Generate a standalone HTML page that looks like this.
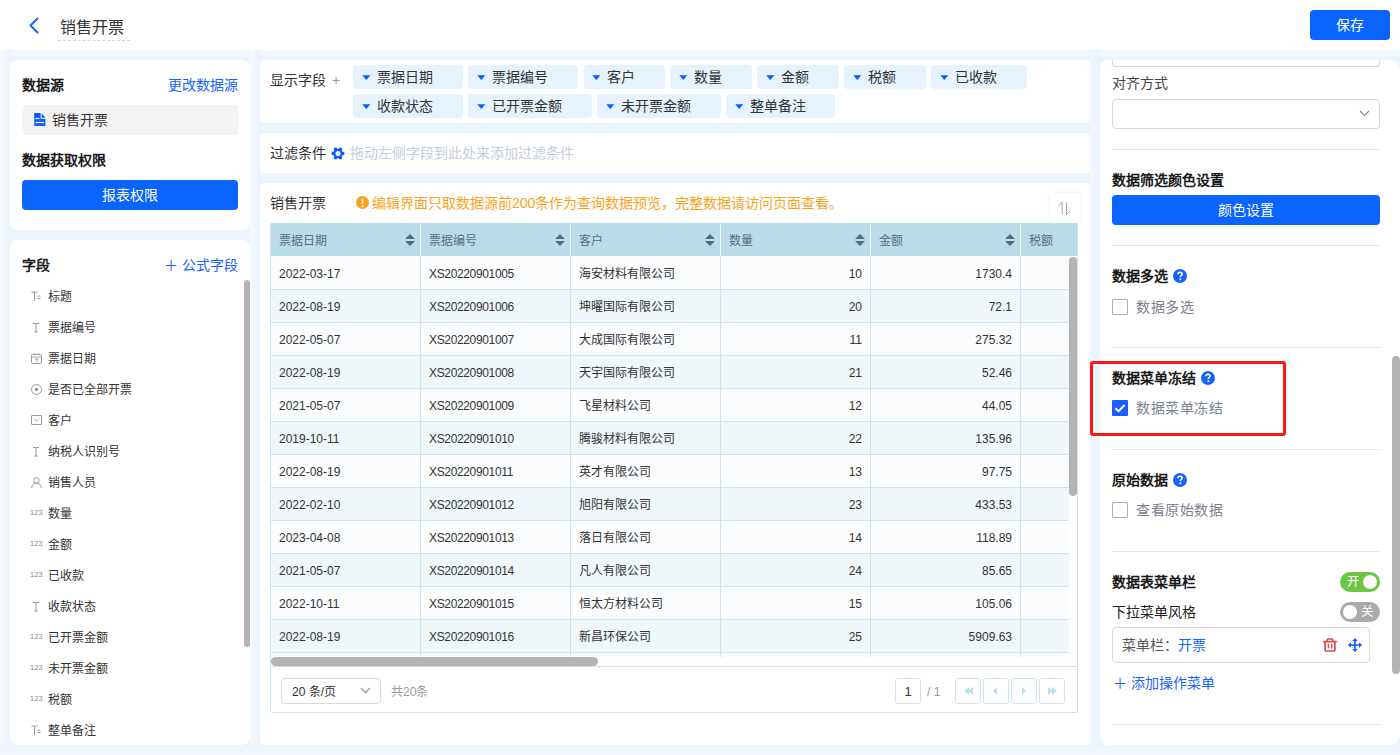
<!DOCTYPE html>
<html lang="zh-CN">
<head>
<meta charset="utf-8">
<style>
*{box-sizing:border-box;margin:0;padding:0}
html,body{width:1400px;height:755px;overflow:hidden}
body{position:relative;background:#ECF4FD;font-family:"Liberation Sans",sans-serif;font-size:14px;color:#333}
.abs{position:absolute}
.panel{position:absolute;background:#fff}
.t{position:absolute;white-space:nowrap;line-height:16px}
.b{font-weight:bold;color:#1a1a1a}
.blue{color:#1763FF}
.btn{position:absolute;background:#0A64FF;color:#fff;border-radius:4px;text-align:center}
</style>
</head>
<body>
<!-- header -->
<div class="panel" style="left:0;top:0;width:1400px;height:50px"></div>
<svg class="abs" style="left:28px;top:17px" width="12" height="17" viewBox="0 0 12 17"><path d="M9.5 1.5 L2.5 8.5 L9.5 15.5" fill="none" stroke="#1763FF" stroke-width="2" stroke-linecap="round" stroke-linejoin="round"/></svg>
<div class="t" style="left:60px;top:19px;font-size:16px;line-height:18px;color:#333">销售开票</div>
<div class="abs" style="left:58px;top:40px;width:72px;border-top:1px dashed #D6D6D6"></div>
<div class="btn" style="left:1310px;top:10px;width:80px;height:30px;line-height:30px;font-size:14px">保存</div>

<div class="abs" style="left:0;top:50px;width:1400px;height:10px;background:linear-gradient(180deg,#F4F9FE,#E8F2FD)"></div>
<div class="abs" style="left:0;top:50px;width:10px;height:705px;background:linear-gradient(90deg,#F6FAFF,#EBF3FD)"></div>
<div class="abs" style="left:250px;top:50px;width:10px;height:705px;background:linear-gradient(90deg,#F8FBFF,#E9F2FD)"></div>
<div class="abs" style="left:1090px;top:50px;width:10px;height:705px;background:linear-gradient(90deg,#F2F8FF,#E9F2FD)"></div>
<div class="abs" style="left:0;top:745px;width:1400px;height:10px;background:linear-gradient(180deg,#EDF5FE,#F3F8FE)"></div>

<!-- left panel 1 -->
<div class="panel" style="left:10px;top:60px;width:240px;height:170px;border-radius:8px"></div>
<div class="t b" style="left:22px;top:77px">数据源</div>
<div class="t blue" style="left:168px;top:77px">更改数据源</div>
<div class="abs" style="left:22px;top:105px;width:216px;height:30px;background:#F4F4F4;border-radius:2px"></div>
<svg class="abs" style="left:33.5px;top:113px" width="12" height="13" viewBox="0 0 12 13"><path d="M0.2 0 H6.6 V5.8 H11.4 V13 H0.2 Z" fill="#0A5CFF"/><path d="M7.6 0.5 L11.4 4.8 H7.6 Z" fill="#0A5CFF"/><rect x="1.5" y="4.9" width="3.9" height="1.2" fill="#fff"/><rect x="1.5" y="8.9" width="8.6" height="1.2" fill="#fff"/></svg>
<div class="t" style="left:52px;top:112px">销售开票</div>
<div class="t b" style="left:22px;top:152px">数据获取权限</div>
<div class="btn" style="left:22px;top:180px;width:216px;height:30px;line-height:30px">报表权限</div>

<!-- left panel 2 -->
<div class="panel" style="left:10px;top:240px;width:240px;height:505px;border-radius:8px"></div>
<div class="t b" style="left:22px;top:257px">字段</div>
<div class="t blue" style="left:164px;top:257px">＋ 公式字段</div>
<div class="abs" style="left:244px;top:280px;width:6px;height:367px;background:#B3B3B3;border-radius:3px"></div>
<svg class="abs" style="left:31px;top:290.5px" width="12" height="12" viewBox="0 0 12 12"><path d="M0.5 1 H6.5 M3.5 1 V10" stroke="#999" stroke-width="1" fill="none"/><path d="M6.5 5 H9.5 M6.5 7.5 H9.5" stroke="#999" stroke-width="1" fill="none"/></svg>
<div class="t" style="left:48px;top:288.5px;font-size:12px">标题</div>
<svg class="abs" style="left:31px;top:321.5px" width="12" height="12" viewBox="0 0 12 12"><path d="M2 1.5 H8 M5 1.5 V10 M3.3 10 H6.7" stroke="#999" stroke-width="1" fill="none"/></svg>
<div class="t" style="left:48px;top:319.5px;font-size:12px">票据编号</div>
<svg class="abs" style="left:31px;top:352.5px" width="12" height="12" viewBox="0 0 12 12"><rect x="0.5" y="1.5" width="10" height="9" rx="1" stroke="#999" stroke-width="1" fill="none"/><path d="M0.5 4 H10.5 M3 0 V2 M8 0 V2 M4 6 H7 L5 9" stroke="#999" stroke-width="0.9" fill="none"/></svg>
<div class="t" style="left:48px;top:350.5px;font-size:12px">票据日期</div>
<svg class="abs" style="left:31px;top:383.5px" width="12" height="12" viewBox="0 0 12 12"><circle cx="5.5" cy="5.5" r="5" stroke="#999" stroke-width="1" fill="none"/><circle cx="5.5" cy="5.5" r="1.4" fill="#777"/></svg>
<div class="t" style="left:48px;top:381.5px;font-size:12px">是否已全部开票</div>
<svg class="abs" style="left:31px;top:414.5px" width="12" height="12" viewBox="0 0 12 12"><rect x="0.5" y="0.5" width="10" height="9" rx="0.5" stroke="#999" stroke-width="1" fill="none"/><path d="M3.3 4 L5.5 6 L7.7 4" stroke="#999" stroke-width="0.9" fill="none"/></svg>
<div class="t" style="left:48px;top:412.5px;font-size:12px">客户</div>
<svg class="abs" style="left:31px;top:445.5px" width="12" height="12" viewBox="0 0 12 12"><path d="M2 1.5 H8 M5 1.5 V10 M3.3 10 H6.7" stroke="#999" stroke-width="1" fill="none"/></svg>
<div class="t" style="left:48px;top:443.5px;font-size:12px">纳税人识别号</div>
<svg class="abs" style="left:31px;top:476.5px" width="12" height="12" viewBox="0 0 12 12"><circle cx="5.5" cy="3.3" r="2.8" stroke="#999" stroke-width="1" fill="none"/><path d="M0.6 11 C1 7.5 3 6.3 5.5 6.3 C8 6.3 10 7.5 10.4 11" stroke="#999" stroke-width="1" fill="none"/></svg>
<div class="t" style="left:48px;top:474.5px;font-size:12px">销售人员</div>
<div class="t" style="left:30px;top:508.5px;font-size:7.4px;line-height:8px;color:#8a8a8a;letter-spacing:0.2px">123</div>
<div class="t" style="left:48px;top:505.5px;font-size:12px">数量</div>
<div class="t" style="left:30px;top:539.5px;font-size:7.4px;line-height:8px;color:#8a8a8a;letter-spacing:0.2px">123</div>
<div class="t" style="left:48px;top:536.5px;font-size:12px">金额</div>
<div class="t" style="left:30px;top:570.5px;font-size:7.4px;line-height:8px;color:#8a8a8a;letter-spacing:0.2px">123</div>
<div class="t" style="left:48px;top:567.5px;font-size:12px">已收款</div>
<svg class="abs" style="left:31px;top:600.5px" width="12" height="12" viewBox="0 0 12 12"><path d="M2 1.5 H8 M5 1.5 V10 M3.3 10 H6.7" stroke="#999" stroke-width="1" fill="none"/></svg>
<div class="t" style="left:48px;top:598.5px;font-size:12px">收款状态</div>
<div class="t" style="left:30px;top:632.5px;font-size:7.4px;line-height:8px;color:#8a8a8a;letter-spacing:0.2px">123</div>
<div class="t" style="left:48px;top:629.5px;font-size:12px">已开票金额</div>
<div class="t" style="left:30px;top:663.5px;font-size:7.4px;line-height:8px;color:#8a8a8a;letter-spacing:0.2px">123</div>
<div class="t" style="left:48px;top:660.5px;font-size:12px">未开票金额</div>
<div class="t" style="left:30px;top:694.5px;font-size:7.4px;line-height:8px;color:#8a8a8a;letter-spacing:0.2px">123</div>
<div class="t" style="left:48px;top:691.5px;font-size:12px">税额</div>
<svg class="abs" style="left:31px;top:724.5px" width="12" height="12" viewBox="0 0 12 12"><path d="M0.5 1 H6.5 M3.5 1 V10" stroke="#999" stroke-width="1" fill="none"/><path d="M6.5 5 H9.5 M6.5 7.5 H9.5" stroke="#999" stroke-width="1" fill="none"/></svg>
<div class="t" style="left:48px;top:722.5px;font-size:12px">整单备注</div>

<!-- middle panels -->
<div class="panel" style="left:260px;top:60px;width:830px;height:63px;border-radius:4px"></div>
<div class="t" style="left:270px;top:72px">显示字段</div>
<div class="t" style="left:332px;top:72px;color:#999">+</div>
<div class="abs" style="left:353.3px;top:65px;width:110px;height:23.5px;background:#E6F2FE;border-radius:4px"></div>
<svg class="abs" style="left:362.0px;top:74.5px" width="9" height="6" viewBox="0 0 9 6"><path d="M0.3 0.3 H8.3 L4.3 5 Z" fill="#0A5CFF"/></svg>
<div class="t" style="left:376.9px;top:68.5px">票据日期</div>
<div class="abs" style="left:468.3px;top:65px;width:110px;height:23.5px;background:#E6F2FE;border-radius:4px"></div>
<svg class="abs" style="left:477.0px;top:74.5px" width="9" height="6" viewBox="0 0 9 6"><path d="M0.3 0.3 H8.3 L4.3 5 Z" fill="#0A5CFF"/></svg>
<div class="t" style="left:491.9px;top:68.5px">票据编号</div>
<div class="abs" style="left:583.5px;top:65px;width:81.3px;height:23.5px;background:#E6F2FE;border-radius:4px"></div>
<svg class="abs" style="left:592.2px;top:74.5px" width="9" height="6" viewBox="0 0 9 6"><path d="M0.3 0.3 H8.3 L4.3 5 Z" fill="#0A5CFF"/></svg>
<div class="t" style="left:607.1px;top:68.5px">客户</div>
<div class="abs" style="left:670.3px;top:65px;width:81.4px;height:23.5px;background:#E6F2FE;border-radius:4px"></div>
<svg class="abs" style="left:679.0px;top:74.5px" width="9" height="6" viewBox="0 0 9 6"><path d="M0.3 0.3 H8.3 L4.3 5 Z" fill="#0A5CFF"/></svg>
<div class="t" style="left:693.9px;top:68.5px">数量</div>
<div class="abs" style="left:757px;top:65px;width:81.75px;height:23.5px;background:#E6F2FE;border-radius:4px"></div>
<svg class="abs" style="left:765.7px;top:74.5px" width="9" height="6" viewBox="0 0 9 6"><path d="M0.3 0.3 H8.3 L4.3 5 Z" fill="#0A5CFF"/></svg>
<div class="t" style="left:780.6px;top:68.5px">金额</div>
<div class="abs" style="left:844.25px;top:65px;width:81.5px;height:23.5px;background:#E6F2FE;border-radius:4px"></div>
<svg class="abs" style="left:853.0px;top:74.5px" width="9" height="6" viewBox="0 0 9 6"><path d="M0.3 0.3 H8.3 L4.3 5 Z" fill="#0A5CFF"/></svg>
<div class="t" style="left:867.9px;top:68.5px">税额</div>
<div class="abs" style="left:931.25px;top:65px;width:95.5px;height:23.5px;background:#E6F2FE;border-radius:4px"></div>
<svg class="abs" style="left:940.0px;top:74.5px" width="9" height="6" viewBox="0 0 9 6"><path d="M0.3 0.3 H8.3 L4.3 5 Z" fill="#0A5CFF"/></svg>
<div class="t" style="left:954.9px;top:68.5px">已收款</div>
<div class="abs" style="left:353.3px;top:94px;width:110px;height:23.5px;background:#E6F2FE;border-radius:4px"></div>
<svg class="abs" style="left:362.0px;top:103.5px" width="9" height="6" viewBox="0 0 9 6"><path d="M0.3 0.3 H8.3 L4.3 5 Z" fill="#0A5CFF"/></svg>
<div class="t" style="left:376.9px;top:97.5px">收款状态</div>
<div class="abs" style="left:468.3px;top:94px;width:123.4px;height:23.5px;background:#E6F2FE;border-radius:4px"></div>
<svg class="abs" style="left:477.0px;top:103.5px" width="9" height="6" viewBox="0 0 9 6"><path d="M0.3 0.3 H8.3 L4.3 5 Z" fill="#0A5CFF"/></svg>
<div class="t" style="left:491.9px;top:97.5px">已开票金额</div>
<div class="abs" style="left:597.2px;top:94px;width:123.4px;height:23.5px;background:#E6F2FE;border-radius:4px"></div>
<svg class="abs" style="left:605.9px;top:103.5px" width="9" height="6" viewBox="0 0 9 6"><path d="M0.3 0.3 H8.3 L4.3 5 Z" fill="#0A5CFF"/></svg>
<div class="t" style="left:620.8px;top:97.5px">未开票金额</div>
<div class="abs" style="left:726.3px;top:94px;width:109.2px;height:23.5px;background:#E6F2FE;border-radius:4px"></div>
<svg class="abs" style="left:735.0px;top:103.5px" width="9" height="6" viewBox="0 0 9 6"><path d="M0.3 0.3 H8.3 L4.3 5 Z" fill="#0A5CFF"/></svg>
<div class="t" style="left:749.9px;top:97.5px">整单备注</div>

<div class="panel" style="left:260px;top:133px;width:830px;height:40px;border-radius:4px"></div>
<div class="t" style="left:270px;top:145px">过滤条件</div>
<svg class="abs" style="left:330.5px;top:146.5px" width="14" height="13" viewBox="0 0 14 13"><g fill="#0A5CFF"><circle cx="7" cy="6.5" r="4.6"/><circle cx="11.6" cy="6.5" r="1.9"/><circle cx="2.4" cy="6.5" r="1.9"/><circle cx="9.3" cy="2.5" r="1.9"/><circle cx="4.7" cy="2.5" r="1.9"/><circle cx="9.3" cy="10.5" r="1.9"/><circle cx="4.7" cy="10.5" r="1.9"/></g><circle cx="7" cy="6.5" r="2.5" fill="#fff"/></svg>
<div class="t" style="left:350px;top:145px;color:#C5CDD9">拖动左侧字段到此处来添加过滤条件</div>

<div class="panel" style="left:260px;top:183px;width:830px;height:562px;border-radius:4px"></div>
<div class="t" style="left:270px;top:195px">销售开票</div>
<svg class="abs" style="left:356px;top:196px" width="13" height="13" viewBox="0 0 13 13"><circle cx="6.5" cy="6.5" r="6.5" fill="#FBA21C"/><rect x="5.6" y="2.5" width="1.8" height="5.5" rx="0.9" fill="#fff"/><circle cx="6.5" cy="10" r="1" fill="#fff"/></svg>
<div class="t" style="left:372px;top:195px;color:#FBA21C">编辑界面只取数据源前200条作为查询数据预览，完整数据请访问页面查看。</div>
<div class="abs" style="left:1050px;top:193px;width:30px;height:30px;background:#fff;box-shadow:0 0 4px rgba(0,0,0,0.08)"></div>
<svg class="abs" style="left:1057px;top:201px" width="16" height="15" viewBox="0 0 16 15"><path d="M5.2 13.5 V1 L1.2 5" fill="none" stroke="#A6A6A6" stroke-width="1"/><path d="M9.5 1 V13.5 L13.5 9.5" fill="none" stroke="#A6A6A6" stroke-width="1"/></svg>
<div class="abs" style="left:270px;top:223px;width:808px;height:490px;border:1px solid #CDE4EE;border-radius:2px"></div>
<div class="abs" style="left:271px;top:223px;width:806px;height:33px;background:#B9DCEA"></div>
<div class="t" style="left:279px;top:233px;font-size:12px;color:#5E6A78">票据日期</div>
<svg class="abs" style="left:405px;top:233.5px" width="10" height="12" viewBox="0 0 10 12"><path d="M5 0 L10 5 H0 Z M0 7 H10 L5 12 Z" fill="#5A6A85"/></svg>
<div class="abs" style="left:420px;top:224px;width:1px;height:32px;background:#fff"></div>
<div class="t" style="left:429px;top:233px;font-size:12px;color:#5E6A78">票据编号</div>
<svg class="abs" style="left:555px;top:233.5px" width="10" height="12" viewBox="0 0 10 12"><path d="M5 0 L10 5 H0 Z M0 7 H10 L5 12 Z" fill="#5A6A85"/></svg>
<div class="abs" style="left:570px;top:224px;width:1px;height:32px;background:#fff"></div>
<div class="t" style="left:579px;top:233px;font-size:12px;color:#5E6A78">客户</div>
<svg class="abs" style="left:705px;top:233.5px" width="10" height="12" viewBox="0 0 10 12"><path d="M5 0 L10 5 H0 Z M0 7 H10 L5 12 Z" fill="#5A6A85"/></svg>
<div class="abs" style="left:720px;top:224px;width:1px;height:32px;background:#fff"></div>
<div class="t" style="left:729px;top:233px;font-size:12px;color:#5E6A78">数量</div>
<svg class="abs" style="left:855px;top:233.5px" width="10" height="12" viewBox="0 0 10 12"><path d="M5 0 L10 5 H0 Z M0 7 H10 L5 12 Z" fill="#5A6A85"/></svg>
<div class="abs" style="left:870px;top:224px;width:1px;height:32px;background:#fff"></div>
<div class="t" style="left:879px;top:233px;font-size:12px;color:#5E6A78">金额</div>
<svg class="abs" style="left:1005px;top:233.5px" width="10" height="12" viewBox="0 0 10 12"><path d="M5 0 L10 5 H0 Z M0 7 H10 L5 12 Z" fill="#5A6A85"/></svg>
<div class="abs" style="left:1020px;top:224px;width:1px;height:32px;background:#fff"></div>
<div class="t" style="left:1029px;top:233px;font-size:12px;color:#5E6A78">税额</div>
<div class="abs" style="left:271px;top:256px;width:806px;height:410px;overflow:hidden;background:#fff">
<div class="abs" style="left:0;top:0px;width:798px;height:34px;background:#FAFCFE;border-bottom:1px solid #CDE4EE"></div>
<div class="t" style="left:8px;top:10px;font-size:12px">2022-03-17</div>
<div class="t" style="left:158px;top:10px;font-size:12px;letter-spacing:-0.35px">XS20220901005</div>
<div class="t" style="left:308px;top:10px;font-size:12px">海安材料有限公司</div>
<div class="t" style="left:449px;top:10px;width:142px;text-align:right;font-size:12px">10</div>
<div class="t" style="left:599px;top:10px;width:142px;text-align:right;font-size:12px">1730.4</div>
<div class="abs" style="left:0;top:34px;width:798px;height:33px;background:#F0F7FA;border-bottom:1px solid #CDE4EE"></div>
<div class="t" style="left:8px;top:43px;font-size:12px">2022-08-19</div>
<div class="t" style="left:158px;top:43px;font-size:12px;letter-spacing:-0.35px">XS20220901006</div>
<div class="t" style="left:308px;top:43px;font-size:12px">坤曜国际有限公司</div>
<div class="t" style="left:449px;top:43px;width:142px;text-align:right;font-size:12px">20</div>
<div class="t" style="left:599px;top:43px;width:142px;text-align:right;font-size:12px">72.1</div>
<div class="abs" style="left:0;top:67px;width:798px;height:33px;background:#FAFCFE;border-bottom:1px solid #CDE4EE"></div>
<div class="t" style="left:8px;top:76px;font-size:12px">2022-05-07</div>
<div class="t" style="left:158px;top:76px;font-size:12px;letter-spacing:-0.35px">XS20220901007</div>
<div class="t" style="left:308px;top:76px;font-size:12px">大成国际有限公司</div>
<div class="t" style="left:449px;top:76px;width:142px;text-align:right;font-size:12px">11</div>
<div class="t" style="left:599px;top:76px;width:142px;text-align:right;font-size:12px">275.32</div>
<div class="abs" style="left:0;top:100px;width:798px;height:33px;background:#F0F7FA;border-bottom:1px solid #CDE4EE"></div>
<div class="t" style="left:8px;top:109px;font-size:12px">2022-08-19</div>
<div class="t" style="left:158px;top:109px;font-size:12px;letter-spacing:-0.35px">XS20220901008</div>
<div class="t" style="left:308px;top:109px;font-size:12px">天宇国际有限公司</div>
<div class="t" style="left:449px;top:109px;width:142px;text-align:right;font-size:12px">21</div>
<div class="t" style="left:599px;top:109px;width:142px;text-align:right;font-size:12px">52.46</div>
<div class="abs" style="left:0;top:133px;width:798px;height:33px;background:#FAFCFE;border-bottom:1px solid #CDE4EE"></div>
<div class="t" style="left:8px;top:142px;font-size:12px">2021-05-07</div>
<div class="t" style="left:158px;top:142px;font-size:12px;letter-spacing:-0.35px">XS20220901009</div>
<div class="t" style="left:308px;top:142px;font-size:12px">飞星材料公司</div>
<div class="t" style="left:449px;top:142px;width:142px;text-align:right;font-size:12px">12</div>
<div class="t" style="left:599px;top:142px;width:142px;text-align:right;font-size:12px">44.05</div>
<div class="abs" style="left:0;top:166px;width:798px;height:33px;background:#F0F7FA;border-bottom:1px solid #CDE4EE"></div>
<div class="t" style="left:8px;top:175px;font-size:12px">2019-10-11</div>
<div class="t" style="left:158px;top:175px;font-size:12px;letter-spacing:-0.35px">XS20220901010</div>
<div class="t" style="left:308px;top:175px;font-size:12px">腾骏材料有限公司</div>
<div class="t" style="left:449px;top:175px;width:142px;text-align:right;font-size:12px">22</div>
<div class="t" style="left:599px;top:175px;width:142px;text-align:right;font-size:12px">135.96</div>
<div class="abs" style="left:0;top:199px;width:798px;height:33px;background:#FAFCFE;border-bottom:1px solid #CDE4EE"></div>
<div class="t" style="left:8px;top:208px;font-size:12px">2022-08-19</div>
<div class="t" style="left:158px;top:208px;font-size:12px;letter-spacing:-0.35px">XS20220901011</div>
<div class="t" style="left:308px;top:208px;font-size:12px">英才有限公司</div>
<div class="t" style="left:449px;top:208px;width:142px;text-align:right;font-size:12px">13</div>
<div class="t" style="left:599px;top:208px;width:142px;text-align:right;font-size:12px">97.75</div>
<div class="abs" style="left:0;top:232px;width:798px;height:33px;background:#F0F7FA;border-bottom:1px solid #CDE4EE"></div>
<div class="t" style="left:8px;top:241px;font-size:12px">2022-02-10</div>
<div class="t" style="left:158px;top:241px;font-size:12px;letter-spacing:-0.35px">XS20220901012</div>
<div class="t" style="left:308px;top:241px;font-size:12px">旭阳有限公司</div>
<div class="t" style="left:449px;top:241px;width:142px;text-align:right;font-size:12px">23</div>
<div class="t" style="left:599px;top:241px;width:142px;text-align:right;font-size:12px">433.53</div>
<div class="abs" style="left:0;top:265px;width:798px;height:33px;background:#FAFCFE;border-bottom:1px solid #CDE4EE"></div>
<div class="t" style="left:8px;top:274px;font-size:12px">2023-04-08</div>
<div class="t" style="left:158px;top:274px;font-size:12px;letter-spacing:-0.35px">XS20220901013</div>
<div class="t" style="left:308px;top:274px;font-size:12px">落日有限公司</div>
<div class="t" style="left:449px;top:274px;width:142px;text-align:right;font-size:12px">14</div>
<div class="t" style="left:599px;top:274px;width:142px;text-align:right;font-size:12px">118.89</div>
<div class="abs" style="left:0;top:298px;width:798px;height:33px;background:#F0F7FA;border-bottom:1px solid #CDE4EE"></div>
<div class="t" style="left:8px;top:307px;font-size:12px">2021-05-07</div>
<div class="t" style="left:158px;top:307px;font-size:12px;letter-spacing:-0.35px">XS20220901014</div>
<div class="t" style="left:308px;top:307px;font-size:12px">凡人有限公司</div>
<div class="t" style="left:449px;top:307px;width:142px;text-align:right;font-size:12px">24</div>
<div class="t" style="left:599px;top:307px;width:142px;text-align:right;font-size:12px">85.65</div>
<div class="abs" style="left:0;top:331px;width:798px;height:33px;background:#FAFCFE;border-bottom:1px solid #CDE4EE"></div>
<div class="t" style="left:8px;top:340px;font-size:12px">2022-10-11</div>
<div class="t" style="left:158px;top:340px;font-size:12px;letter-spacing:-0.35px">XS20220901015</div>
<div class="t" style="left:308px;top:340px;font-size:12px">恒太方材料公司</div>
<div class="t" style="left:449px;top:340px;width:142px;text-align:right;font-size:12px">15</div>
<div class="t" style="left:599px;top:340px;width:142px;text-align:right;font-size:12px">105.06</div>
<div class="abs" style="left:0;top:364px;width:798px;height:33px;background:#F0F7FA;border-bottom:1px solid #CDE4EE"></div>
<div class="t" style="left:8px;top:373px;font-size:12px">2022-08-19</div>
<div class="t" style="left:158px;top:373px;font-size:12px;letter-spacing:-0.35px">XS20220901016</div>
<div class="t" style="left:308px;top:373px;font-size:12px">新昌环保公司</div>
<div class="t" style="left:449px;top:373px;width:142px;text-align:right;font-size:12px">25</div>
<div class="t" style="left:599px;top:373px;width:142px;text-align:right;font-size:12px">5909.63</div>
<div class="abs" style="left:0;top:397px;width:798px;height:33px;background:#FAFCFE;border-bottom:1px solid #CDE4EE"></div>
<div class="abs" style="left:149px;top:0;width:1px;height:401px;background:#CDE4EE"></div>
<div class="abs" style="left:299px;top:0;width:1px;height:401px;background:#CDE4EE"></div>
<div class="abs" style="left:449px;top:0;width:1px;height:401px;background:#CDE4EE"></div>
<div class="abs" style="left:599px;top:0;width:1px;height:401px;background:#CDE4EE"></div>
<div class="abs" style="left:749px;top:0;width:1px;height:401px;background:#CDE4EE"></div>
<div class="abs" style="left:0;top:401px;width:806px;height:9px;background:#fff"></div>
<div class="abs" style="left:0;top:401px;width:327px;height:9px;background:#B3B3B3;border-radius:5px"></div>
<div class="abs" style="left:798px;top:1px;width:8px;height:239px;background:#B3B3B3;border-radius:4px"></div>
</div>
<div class="abs" style="left:271px;top:666px;width:806px;height:1px;background:#CDE4EE"></div>
<div class="abs" style="left:281px;top:678px;width:100px;height:26px;border:1px solid #D9D9D9;border-radius:4px;background:#fff"></div>
<div class="t" style="left:292px;top:684px;font-size:12px">20 条/页</div>
<svg class="abs" style="left:360px;top:687px" width="11" height="7" viewBox="0 0 11 7"><path d="M1 1 L5.5 5.5 L10 1" fill="none" stroke="#999" stroke-width="1.3"/></svg>
<div class="t" style="left:391px;top:684px;font-size:12px;color:#999">共20条</div>
<div class="abs" style="left:895px;top:678px;width:26px;height:26px;border:1px solid #CDE4EE;border-radius:3px;background:#fff"></div>
<div class="t" style="left:895px;top:684px;width:26px;text-align:center;font-size:13px">1</div>
<div class="t" style="left:927px;top:684px;font-size:12px;color:#999">/ 1</div>
<div class="abs" style="left:955.3px;top:678px;width:25.5px;height:26px;border:1px solid #CDE4EE;border-radius:3px;background:#fff"></div>
<svg class="abs" style="left:961.8px;top:686px" width="13" height="10" viewBox="0 0 13 10"><path d="M7 1 L2 5 L7 9 Z M11 1 L6 5 L11 9 Z" fill="#BEDDEA"/></svg>
<div class="abs" style="left:983.1px;top:678px;width:25.5px;height:26px;border:1px solid #CDE4EE;border-radius:3px;background:#fff"></div>
<svg class="abs" style="left:989.6px;top:686px" width="13" height="10" viewBox="0 0 13 10"><path d="M7 1 L3 5 L7 9 Z" fill="#BEDDEA"/></svg>
<div class="abs" style="left:1011.2px;top:678px;width:25.5px;height:26px;border:1px solid #CDE4EE;border-radius:3px;background:#fff"></div>
<svg class="abs" style="left:1017.7px;top:686px" width="13" height="10" viewBox="0 0 13 10"><path d="M4 1 L8 5 L4 9 Z" fill="#BEDDEA"/></svg>
<div class="abs" style="left:1039.2px;top:678px;width:25.5px;height:26px;border:1px solid #CDE4EE;border-radius:3px;background:#fff"></div>
<svg class="abs" style="left:1045.7px;top:686px" width="13" height="10" viewBox="0 0 13 10"><path d="M2 1 L7 5 L2 9 Z M6 1 L11 5 L6 9 Z" fill="#BEDDEA"/></svg>

<!-- right panel -->
<div class="panel" style="left:1100px;top:60px;width:300px;height:685px;border-radius:8px 10px 10px 8px"></div>
<div class="abs" style="left:1112px;top:60px;width:268px;height:7px;border:1px solid #D9D9D9;border-top:none;border-radius:0 0 4px 4px;background:#fff"></div>
<div class="t" style="left:1112px;top:74.5px;color:#444">对齐方式</div>
<div class="abs" style="left:1112px;top:99px;width:268px;height:30px;border:1px solid #D9D9D9;border-radius:4px;background:#fff"></div>
<svg class="abs" style="left:1359px;top:110px" width="11" height="7" viewBox="0 0 11 7"><path d="M1 1 L5.5 5.5 L10 1" fill="none" stroke="#888" stroke-width="1.1"/></svg>
<div class="abs" style="left:1112px;top:149px;width:268px;height:1px;background:#E6E6E6"></div>
<div class="t b" style="left:1112px;top:172px">数据筛选颜色设置</div>
<div class="btn" style="left:1112px;top:195px;width:268px;height:30px;line-height:30px">颜色设置</div>
<div class="abs" style="left:1112px;top:245px;width:268px;height:1px;background:#E6E6E6"></div>
<div class="t b" style="left:1112px;top:268px">数据多选</div>
<svg class="abs" style="left:1173px;top:269px" width="14" height="14" viewBox="0 0 14 14"><circle cx="7" cy="7" r="7" fill="#1763FF"/><path d="M4.9 5.3 C4.9 3.9 5.9 3.2 7 3.2 C8.2 3.2 9.1 4 9.1 5.1 C9.1 6.4 7.3 6.6 7.3 8.1" fill="none" stroke="#fff" stroke-width="1.6"/><circle cx="7.3" cy="10.3" r="0.95" fill="#fff"/></svg>
<div class="abs" style="left:1112px;top:299px;width:16px;height:16px;border:1px solid #A9AEBB;border-radius:1px;background:#fff"></div>
<div class="t" style="left:1136px;top:299px;color:#7A8290;letter-spacing:0.6px">数据多选</div>
<div class="abs" style="left:1112px;top:347px;width:268px;height:1px;background:#E6E6E6"></div>
<div class="t b" style="left:1112px;top:370px">数据菜单冻结</div>
<svg class="abs" style="left:1201px;top:371px" width="14" height="14" viewBox="0 0 14 14"><circle cx="7" cy="7" r="7" fill="#1763FF"/><path d="M4.9 5.3 C4.9 3.9 5.9 3.2 7 3.2 C8.2 3.2 9.1 4 9.1 5.1 C9.1 6.4 7.3 6.6 7.3 8.1" fill="none" stroke="#fff" stroke-width="1.6"/><circle cx="7.3" cy="10.3" r="0.95" fill="#fff"/></svg>
<div class="abs" style="left:1112px;top:400px;width:16px;height:16px;background:#1A5EFF;border-radius:1px"></div>
<svg class="abs" style="left:1112px;top:400px" width="16" height="16" viewBox="0 0 16 16"><path d="M3.3 8.2 L6.6 11.2 L12.6 5" fill="none" stroke="#fff" stroke-width="2"/></svg>
<div class="t" style="left:1136px;top:400px;color:#7A8290;letter-spacing:0.6px">数据菜单冻结</div>
<div class="abs" style="left:1112px;top:449px;width:268px;height:1px;background:#E6E6E6"></div>
<div class="t b" style="left:1112px;top:472px">原始数据</div>
<svg class="abs" style="left:1173px;top:473px" width="14" height="14" viewBox="0 0 14 14"><circle cx="7" cy="7" r="7" fill="#1763FF"/><path d="M4.9 5.3 C4.9 3.9 5.9 3.2 7 3.2 C8.2 3.2 9.1 4 9.1 5.1 C9.1 6.4 7.3 6.6 7.3 8.1" fill="none" stroke="#fff" stroke-width="1.6"/><circle cx="7.3" cy="10.3" r="0.95" fill="#fff"/></svg>
<div class="abs" style="left:1112px;top:502px;width:16px;height:16px;border:1px solid #A9AEBB;border-radius:1px;background:#fff"></div>
<div class="t" style="left:1136px;top:502px;color:#7A8290;letter-spacing:0.6px">查看原始数据</div>
<div class="abs" style="left:1112px;top:551px;width:268px;height:1px;background:#E6E6E6"></div>
<div class="t b" style="left:1112px;top:574px">数据表菜单栏</div>
<div class="abs" style="left:1340px;top:572px;width:40px;height:20px;background:#6CC644;border-radius:10px"></div>
<div class="abs" style="left:1363px;top:575px;width:14px;height:14px;background:#fff;border-radius:50%"></div>
<div class="t" style="left:1346.5px;top:574px;font-size:12.5px;color:#fff">开</div>
<div class="t" style="left:1112px;top:604px;color:#222">下拉菜单风格</div>
<div class="abs" style="left:1340px;top:602px;width:40px;height:20px;background:#ABABAB;border-radius:10px"></div>
<div class="abs" style="left:1343px;top:605px;width:14px;height:14px;background:#fff;border-radius:50%"></div>
<div class="t" style="left:1361px;top:604px;font-size:12.5px;color:#fff">关</div>
<div class="abs" style="left:1112px;top:627px;width:258px;height:36px;border:1px solid #D9D9D9;border-radius:4px;background:#fff"></div>
<div class="t" style="left:1122px;top:637px;color:#555">菜单栏：<span style="color:#1763FF">开票</span></div>
<svg class="abs" style="left:1323px;top:638px" width="14" height="14" viewBox="0 0 14 14"><g fill="none" stroke="#E5484D" stroke-linecap="round" stroke-linejoin="round"><path d="M4.1 3.2 V1.7 Q4.1 0.9 4.9 0.9 H9.1 Q9.9 0.9 9.9 1.7 V3.2" stroke-width="1.5"/><path d="M0.9 3.6 H13.1" stroke-width="1.7"/><path d="M2.1 3.8 V12 Q2.1 13 3.1 13 H10.9 Q11.9 13 11.9 12 V3.8" stroke-width="1.7"/><path d="M5.4 6.2 V9.8 M8.6 6.2 V9.8" stroke-width="1.5"/></g></svg>
<svg class="abs" style="left:1348px;top:638px" width="14" height="14" viewBox="0 0 14 14"><path d="M7 1.5 V12.5 M1.5 7 H12.5" stroke="#0A5CFF" stroke-width="1.6"/><path d="M7 0 L9.7 3 H4.3 Z M7 14 L4.3 11 H9.7 Z M0 7 L3 4.3 V9.7 Z M14 7 L11 9.7 V4.3 Z" fill="#0A5CFF"/></svg>
<div class="t blue" style="left:1113px;top:675px">＋ 添加操作菜单</div>
<div class="abs" style="left:1112px;top:724px;width:268px;height:1px;background:#E6E6E6"></div>
<div class="abs" style="left:1090px;top:361px;width:196px;height:75px;border:3px solid #FF1610;border-radius:3px"></div>
<div class="abs" style="left:1392px;top:356px;width:8px;height:318px;background:#B3B3B3;border-radius:4px"></div>
</body>
</html>
